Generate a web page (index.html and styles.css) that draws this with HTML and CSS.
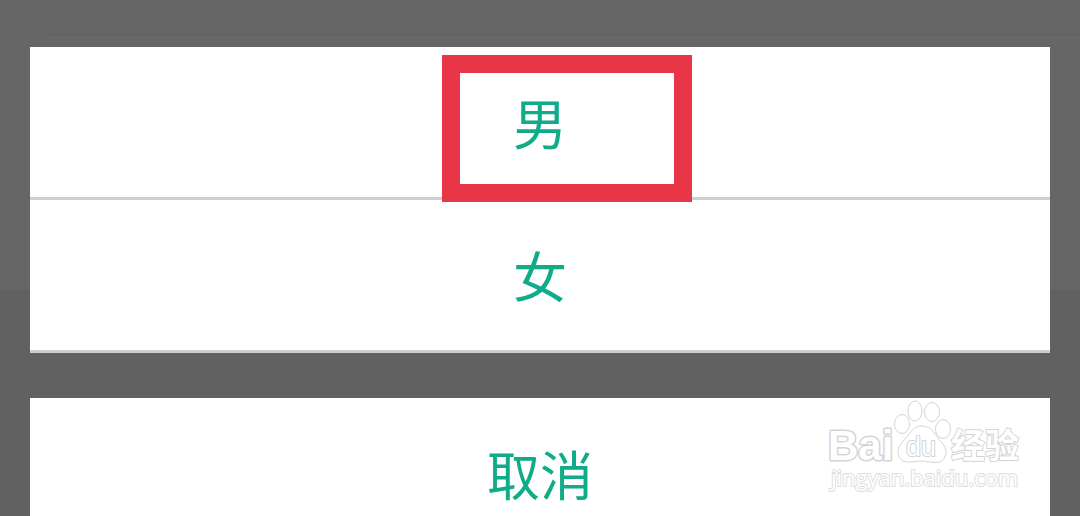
FILE: index.html
```html
<!DOCTYPE html>
<html lang="zh-CN">
<head>
<meta charset="utf-8">
<meta name="viewport" content="width=device-width, initial-scale=1">
<title>选择性别</title>
<link rel="stylesheet" href="styles.css">
</head>
<body>
<main class="overlay">
  <div class="page-line"></div>
  <div class="sheet">
    <button type="button" class="option selected">男</button>
    <button type="button" class="option">女</button>
  </div>
  <div class="sheet sheet-last">
    <button type="button" class="option cancel">取消</button>
    <svg class="watermark" width="200" height="96" viewBox="0 0 200 96" role="img" aria-label="Baidu 经验">
      <g class="mark-outline">
        <text class="mark-bai" x="3" y="61">Bai</text>
        <ellipse cx="77" cy="25" rx="7.5" ry="9.5"/>
        <ellipse cx="90" cy="12" rx="7" ry="10"/>
        <ellipse cx="107" cy="13" rx="7.5" ry="9.5"/>
        <ellipse cx="118" cy="30" rx="7.5" ry="9.5"/>
        <path d="M97 27C90 27 87 31 83 36.500C79 42 73 46 73 53C73 59 77 63 83 63C89 63 92 62 97 62C102 62 105 63.500 111 63.500C117 63.500 121 59 121 53C121 46 115 42.500 111 36.500C107.500 31 104 27 97 27Z"/>
        <text class="mark-du" x="81" y="57">du</text>
        <text class="mark-name" x="126" y="59">经验</text>
      </g>
      <text class="mark-url" x="6" y="87">jingyan.baidu.com</text>
    </svg>
  </div>
</main>
</body>
</html>
```
FILE: styles.css
```css
body {
  margin: 0;
  background: linear-gradient(#666 290px, #616161 290px);
  font-family: "Noto Sans CJK SC", sans-serif;
}

.overlay {
  position: relative;
  box-sizing: border-box;
  height: 100vh;
  display: flex;
  flex-direction: column;
  gap: 45px;
  padding: 47px 30px 0;
}

.page-line {
  position: absolute;
  top: 34px;
  left: 48px;
  right: 0;
  height: 1px;
  background: #5f5f5f;
}

.sheet {
  position: relative;
  display: flex;
  flex-direction: column;
  flex-shrink: 0;
  background: #fff;
}

.sheet-last {
  flex: 1 0 auto;
}

.option {
  position: relative;
  box-sizing: border-box;
  flex-shrink: 0;
  height: 153px;
  margin: 0;
  padding: 0;
  border: 0;
  border-bottom: 3px solid #cecece;
  border-radius: 0;
  background: #fff;
  color: #10ab89;
  font: 400 54px/1 "Noto Sans CJK SC", sans-serif;
  text-align: center;
}

.cancel {
  height: auto;
  flex: 1 0 auto;
  padding: 32px 0 0;
  border: 0;
  font-size: 53px;
}

.selected {
  z-index: 1;
}

.selected::after {
  content: "";
  position: absolute;
  top: 8px;
  left: calc(50% - 98px);
  box-sizing: border-box;
  width: 250px;
  height: 147px;
  border: 18px solid #e83648;
}

.watermark {
  position: absolute;
  top: 1px;
  right: 25px;
  pointer-events: none;
}

.mark-outline {
  fill: #fff;
  stroke: #d4d4d4;
  stroke-width: 1;
}

.mark-outline text {
  stroke-width: 3;
  stroke-linejoin: round;
  paint-order: stroke;
}

.mark-bai {
  font: 700 42px "Liberation Sans", sans-serif;
}

.mark-outline .mark-du {
  font: 400 27px "Liberation Sans", sans-serif;
  stroke-width: 2;
}

.mark-outline .mark-name {
  font: 700 34px "Noto Sans CJK SC", sans-serif;
  stroke-width: 2;
}

.mark-url {
  fill: #fff;
  stroke: #dedede;
  stroke-width: 2;
  paint-order: stroke;
  font: 400 22px "Open Sans", sans-serif;
}
```
